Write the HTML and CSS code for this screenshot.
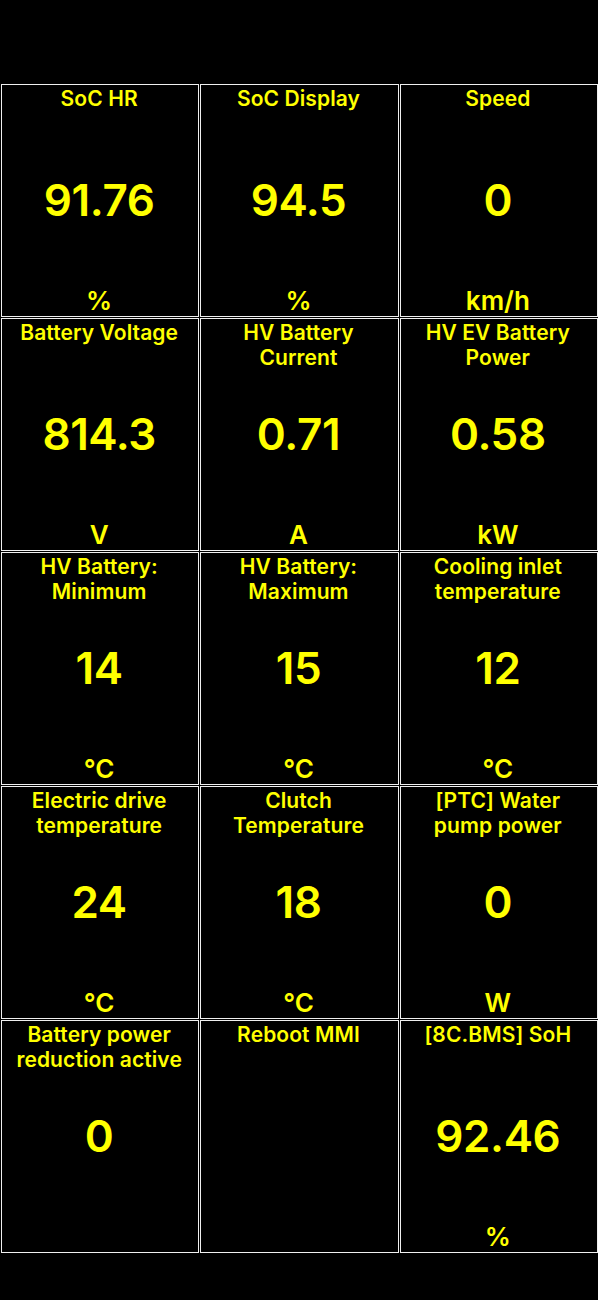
FILE: index.html
```html
<!DOCTYPE html>
<html>
<head>
<meta charset="utf-8">
<link rel="stylesheet" href="styles.css">
</head>
<body>
<div class="grid">
  <div class="cell"><div class="title">SoC HR</div><div class="value">91.76</div><div class="unit">%</div></div>
  <div class="cell"><div class="title">SoC Display</div><div class="value">94.5</div><div class="unit">%</div></div>
  <div class="cell"><div class="title">Speed</div><div class="value">0</div><div class="unit">km/h</div></div>

  <div class="cell"><div class="title">Battery Voltage</div><div class="value">814.3</div><div class="unit">V</div></div>
  <div class="cell"><div class="title">HV Battery<br>Current</div><div class="value">0.71</div><div class="unit">A</div></div>
  <div class="cell"><div class="title">HV EV Battery<br>Power</div><div class="value">0.58</div><div class="unit">kW</div></div>

  <div class="cell"><div class="title">HV Battery:<br>Minimum</div><div class="value">14</div><div class="unit">°C</div></div>
  <div class="cell"><div class="title">HV Battery:<br>Maximum</div><div class="value">15</div><div class="unit">°C</div></div>
  <div class="cell"><div class="title">Cooling inlet<br>temperature</div><div class="value">12</div><div class="unit">°C</div></div>

  <div class="cell"><div class="title">Electric drive<br>temperature</div><div class="value">24</div><div class="unit">°C</div></div>
  <div class="cell"><div class="title">Clutch<br>Temperature</div><div class="value">18</div><div class="unit">°C</div></div>
  <div class="cell"><div class="title">[PTC] Water<br>pump power</div><div class="value">0</div><div class="unit">W</div></div>

  <div class="cell"><div class="title">Battery power<br>reduction active</div><div class="value">0</div><div class="unit"></div></div>
  <div class="cell"><div class="title">Reboot MMI</div><div class="value"></div><div class="unit"></div></div>
  <div class="cell"><div class="title">[8C.BMS] SoH</div><div class="value">92.46</div><div class="unit">%</div></div>
</div>
</body>
</html>
```
FILE: styles.css
```css
html, body {
  margin: 0;
  padding: 0;
  background: #000;
}
body {
  width: 598px;
  height: 1300px;
  font-family: Inter, "Open Sans", "Liberation Sans", sans-serif;
  color: #ffff00;
}
.grid {
  margin: 84px 0 0 1px;
  width: 597px;
  display: grid;
  grid-template-columns: repeat(3, 1fr);
  grid-template-rows: repeat(5, 233px);
  gap: 1px;
}
.cell {
  border: 1px solid #f0f0f0;
  display: grid;
  grid-template-rows: 1fr auto 1fr;
  text-align: center;
  overflow: hidden;
}
.title {
  align-self: start;
  font-size: 21px;
  font-weight: 600;
  line-height: 25px;
  padding-top: 1px;
  padding-right: 2px;
  letter-spacing: 0.1px;
}
.value {
  align-self: center;
  font-size: 44px;
  font-weight: 600;
  line-height: 50px;
  padding-right: 2px;
  padding-bottom: 2px;
  letter-spacing: -0.4px;
}
.unit {
  align-self: end;
  font-size: 26px;
  font-weight: 600;
  line-height: 30px;
  padding-right: 2px;
}
```
